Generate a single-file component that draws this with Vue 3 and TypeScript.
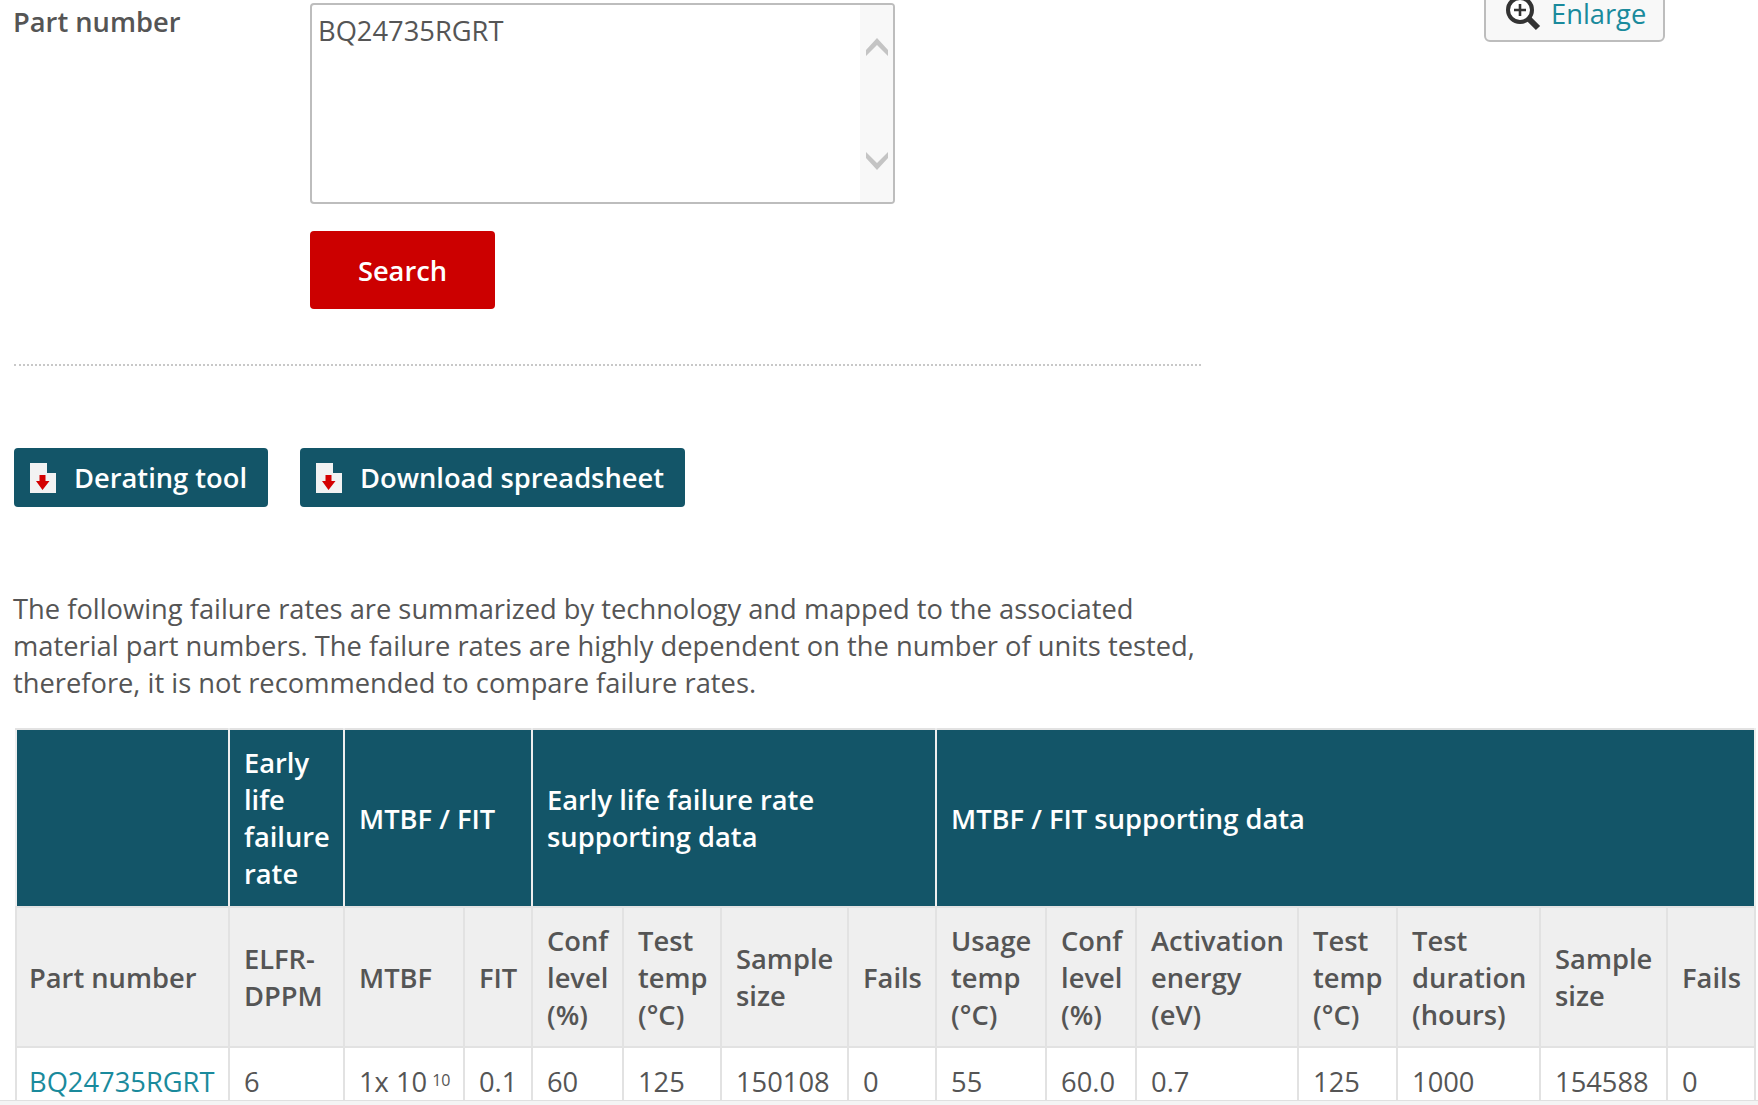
<script setup lang="ts">
const subHeads: { cls: string; lines: string[] }[] = [
  { cls: 'c1', lines: ['Part number'] },
  { cls: 'c2', lines: ['ELFR-', 'DPPM'] },
  { cls: 'c3', lines: ['MTBF'] },
  { cls: 'c4', lines: ['FIT'] },
  { cls: 'c5', lines: ['Conf', 'level', '(%)'] },
  { cls: 'c6', lines: ['Test', 'temp', '(°C)'] },
  { cls: 'c7', lines: ['Sample', 'size'] },
  { cls: 'c8', lines: ['Fails'] },
  { cls: 'c9', lines: ['Usage', 'temp', '(°C)'] },
  { cls: 'c10', lines: ['Conf', 'level', '(%)'] },
  { cls: 'c11', lines: ['Activation', 'energy', '(eV)'] },
  { cls: 'c12', lines: ['Test', 'temp', '(°C)'] },
  { cls: 'c13', lines: ['Test', 'duration', '(hours)'] },
  { cls: 'c14', lines: ['Sample', 'size'] },
  { cls: 'c15', lines: ['Fails'] },
]
const rowAfter: string[] = ['0.1', '60', '125', '150108', '0', '55', '60.0', '0.7', '125', '1000', '154588', '0']
</script>

<template>
  <div class="page">
    <div class="form-row">
      <div class="label">Part number</div>
      <div class="form-main">
        <div class="textarea">
          <div class="value">BQ24735RGRT</div>
          <div class="scroll">
            <svg width="22" height="18" viewBox="0 0 22 18"><path d="M0 18V12L11 0L22 12V18L11 7Z" fill="#c4c4c4" /></svg>
            <svg width="22" height="18" viewBox="0 0 22 18"><path d="M0 0V6L11 18L22 6V0L11 11Z" fill="#c4c4c4" /></svg>
          </div>
        </div>
        <button class="search">Search</button>
      </div>
      <div class="enlarge">
        <svg class="zoom-ic" width="36" height="36" viewBox="0 0 36 36">
          <circle cx="15" cy="15" r="12" fill="#fff" stroke="#333" stroke-width="4" />
          <path d="M15 9V21M9 15H21" stroke="#333" stroke-width="2.6" />
          <path d="M24 24L33 33" stroke="#333" stroke-width="6" />
        </svg>
        <span class="enlarge-text">Enlarge</span>
      </div>
    </div>
    <div class="dots"></div>
    <div class="actions">
      <a class="act">
        <svg width="26" height="30" viewBox="0 0 26 30">
          <path d="M0 0H17V10H26V30H0Z" fill="#f2f2f2" />
          <path d="M9.5 12H15.5V18H19.5L12.5 27L6 18H9.5Z" fill="#d40000" />
        </svg>
        <span>Derating tool</span>
      </a>
      <a class="act">
        <svg width="26" height="30" viewBox="0 0 26 30">
          <path d="M0 0H17V10H26V30H0Z" fill="#f2f2f2" />
          <path d="M9.5 12H15.5V18H19.5L12.5 27L6 18H9.5Z" fill="#d40000" />
        </svg>
        <span>Download spreadsheet</span>
      </a>
    </div>
    <p class="intro">The following failure rates are summarized by technology and mapped to the associated<br />material part numbers. The failure rates are highly dependent on the number of units tested,<br />therefore, it is not recommended to compare failure rates.</p>
    <table class="grid">
      <colgroup>
        <col v-for="h in subHeads" :key="h.cls" :class="h.cls" />
      </colgroup>
      <tbody>
        <tr class="top">
          <th></th>
          <th>Early<br />life<br />failure<br />rate</th>
          <th colspan="2">MTBF / FIT</th>
          <th colspan="4">Early life failure rate<br />supporting data</th>
          <th colspan="7">MTBF / FIT supporting data</th>
        </tr>
        <tr class="sub">
          <th v-for="h in subHeads" :key="h.cls">
            <template v-for="(l, i) in h.lines" :key="i"><br v-if="i > 0" />{{ l }}</template>
          </th>
        </tr>
        <tr class="data">
          <td><a class="link">BQ24735RGRT</a></td>
          <td>6</td>
          <td>1x 10<sup>10</sup></td>
          <td v-for="(v, i) in rowAfter" :key="i">{{ v }}</td>
        </tr>
      </tbody>
    </table>
    <div class="strip"></div>
  </div>
</template>

<style>
html, body { margin: 0; background: #fff; }
body { overflow: hidden; }
</style>

<style scoped>
.page {
  width: 1758px;
  height: 1105px;
  overflow: hidden;
  position: relative;
  font-family: "Open Sans", sans-serif;
  font-size: 27.3px;
  line-height: 37px;
  color: #555;
}
.form-row { display: flex; height: 310px; }
.label { width: 310px; padding-left: 13px; box-sizing: border-box; font-weight: 600; margin-top: 3px; }
.form-main { width: 585px; padding-top: 3px; }
.textarea {
  box-sizing: border-box;
  width: 585px;
  height: 201px;
  border: 2px solid #bdbdbd;
  border-radius: 4px;
  display: flex;
  overflow: hidden;
}
.value { flex: 1; padding: 7px 6px; }
.scroll { width: 33px; background: #f8f8f8; display: flex; flex-direction: column; justify-content: space-between; align-items: center; padding: 33px 0 32px; box-sizing: border-box; }
.search {
  display: block;
  margin-top: 27px;
  width: 185px;
  height: 78px;
  border: 0;
  border-radius: 4px;
  background: #cc0000;
  color: #fff;
  font: 600 27.3px/37px "Open Sans", sans-serif;
  padding: 0;
}
.enlarge {
  margin-left: 589px;
  margin-top: -20px;
  box-sizing: border-box;
  width: 181px;
  height: 62px;
  border: 2px solid #bdbdbd;
  border-radius: 6px;
  background: #f8f8f8;
  display: flex;
  align-items: flex-end;
  padding: 0 0 9px 19px;
  gap: 10px;
  color: #1a8a9c;
}
.enlarge-text { line-height: 24px; margin-bottom: 5px; }
.dots { margin: 54px 0 0 14px; width: 1187px; border-top: 2px dotted #c8c8c8; }
.actions { display: flex; gap: 32px; margin: 82px 0 0 14px; }
.act {
  display: flex;
  align-items: center;
  gap: 18px;
  height: 59px;
  box-sizing: border-box;
  padding: 0 21px 0 16px;
  background: #135568;
  border-radius: 4px;
  color: #fff;
  font-weight: 600;
}
.act span { margin-top: -1px; }
.intro { margin: 83px 0 0 13px; width: 1230px; }
.grid {
  position: absolute;
  left: 15px;
  top: 728px;
  width: 1741px;
  table-layout: fixed;
  border-collapse: collapse;
  border: 2px solid #e2e2e2;
}
.c1 { width: 213px; } .c2 { width: 115px; } .c3 { width: 120px; } .c4 { width: 68px; }
.c5 { width: 91px; } .c6 { width: 98px; } .c7 { width: 127px; } .c8 { width: 88px; }
.c9 { width: 110px; } .c10 { width: 90px; } .c11 { width: 162px; } .c12 { width: 99px; }
.c13 { width: 143px; } .c14 { width: 127px; } .c15 { width: 88px; }
.grid th, .grid td { padding: 0 0 0 14px; text-align: left; vertical-align: middle; border: 2px solid #e2e2e2; white-space: nowrap; overflow: hidden; }
.grid tr > :first-child { padding-left: 12px; }
.top th { background: #135568; color: #fff; font-weight: 600; height: 176px; border-left-color: #eee; border-right-color: #eee; }
.sub th { background: #efefef; font-weight: 600; height: 138px; }
.data td { height: 53px; background: #fff; padding-top: 15px; box-sizing: border-box; }
.link { color: #1a8a9c; }
sup { font-size: 16px; line-height: 0; vertical-align: 6px; margin-left: 5px; }
.strip { position: absolute; left: 0; right: 0; bottom: 0; height: 4px; background: #f4f4f4; border-top: 1px solid #e0e0e0; }
</style>
